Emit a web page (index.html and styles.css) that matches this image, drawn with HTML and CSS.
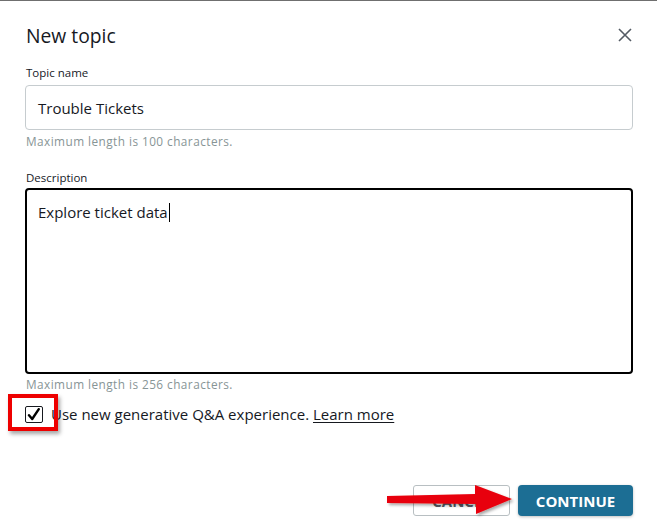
FILE: index.html
```html
<!DOCTYPE html>
<html lang="en">
<head>
<meta charset="utf-8">
<title>New topic</title>
<link rel="stylesheet" href="styles.css">
</head>
<body>
<div class="modal">
  <header class="modal-header">
    <h1 class="modal-title">New topic</h1>
    <button class="close-btn" aria-label="Close">
      <svg width="14" height="14" viewBox="0 0 14 14"><path d="M1 1 L13 13 M13 1 L1 13" stroke="#545b64" stroke-width="1.6" fill="none"/></svg>
    </button>
  </header>

  <div class="field">
    <label class="field-label">Topic name</label>
    <div class="input">Trouble Tickets</div>
    <div class="hint">Maximum length is 100 characters.</div>
  </div>

  <div class="field field-desc">
    <label class="field-label">Description</label>
    <div class="textarea">Explore ticket data<span class="caret"></span></div>
    <div class="hint">Maximum length is 256 characters.</div>
  </div>

  <div class="check-row">
    <span class="checkbox">
      <svg width="14" height="13" viewBox="0 0 14 13"><path d="M2 7.2 L5.2 11 L11.8 1.2" stroke="#000" stroke-width="2.4" fill="none" stroke-linecap="round" stroke-linejoin="round"/></svg>
    </span>
    <span class="check-text">Use new generative Q&amp;A experience. <a class="learn">Learn more</a></span>
    <span class="mark-box"></span>
  </div>

  <footer class="modal-footer">
    <button class="btn btn-cancel">CANCEL</button>
    <button class="btn btn-primary">CONTINUE</button>
    <svg class="arrow" width="140" height="40" viewBox="0 0 140 40">
      <defs>
        <filter id="sh" x="-10%" y="-30%" width="130%" height="170%">
          <feDropShadow dx="2" dy="2" stdDeviation="1.5" flood-color="#000" flood-opacity="0.35"/>
        </filter>
      </defs>
      <path d="M4 13 L92 11 L92 2 L129 16 L93 31 L93 21 L4 20 Z" fill="#e8000b" filter="url(#sh)"/>
    </svg>
  </footer>
</div>
</body>
</html>
```

FILE: styles.css
```css
* { box-sizing: border-box; }
html, body { margin: 0; padding: 0; }
body {
  width: 657px;
  height: 532px;
  background: #fff;
  border-top: 1px solid #6f6f6f;
  font-family: "Open Sans", "Liberation Sans", sans-serif;
  color: #16191f;
  overflow: hidden;
}
.modal {
  position: relative;
  padding: 0 24px 0 25px;
}
.modal-header {
  display: flex;
  align-items: center;
  justify-content: space-between;
  height: 64px;
  padding-top: 4px;
}
.modal-title {
  margin: 0 0 0 1px;
  font-size: 19.3px;
  font-weight: 400;
  color: #16191f;
}
.close-btn {
  border: 0;
  background: none;
  padding: 0;
  width: 14px;
  height: 14px;
  margin-right: 1px;
  display: flex;
}
.field { display: flex; flex-direction: column; }
.field-label {
  font-size: 11.5px;
  color: #16191f;
  margin: 0 0 4px 1px;
  line-height: 16px;
}
.input {
  height: 45px;
  border: 1px solid #c6cccf;
  border-radius: 4px;
  padding: 0 12px;
  display: flex;
  align-items: center;
  font-size: 15px;
}
.hint {
  font-size: 11.8px;
  color: #879596;
  margin: 3px 0 0 1px;
  line-height: 16px;
  letter-spacing: 0.45px;
}
.field-desc { margin-top: 21px; }
.field-desc .field-label { margin-bottom: 2px; }
.textarea {
  height: 186px;
  border: 2px solid #000;
  border-radius: 4px;
  padding: 11px 11px;
  font-size: 15px;
  line-height: 22px;
}
.caret {
  display: inline-block;
  width: 1px;
  height: 19px;
  background: #000;
  vertical-align: -4px;
  margin-left: 1px;
}
.field-desc .hint { margin-top: 2px; }
.check-row {
  position: relative;
  display: flex;
  align-items: center;
  gap: 8px;
  margin-top: 11px;
  height: 22px;
}
.checkbox {
  width: 18px;
  height: 17px;
  border: 1.5px solid #16191f;
  border-radius: 2px;
  display: flex;
  align-items: center;
  justify-content: center;
}
.check-text {
  font-size: 15px;
  color: #16191f;
}
.learn {
  color: #16191f;
  text-decoration: underline;
  text-underline-offset: 2px;
}
.mark-box {
  position: absolute;
  left: -17px;
  top: -9px;
  width: 50px;
  height: 37px;
  border: 4px solid #ee0000;
  box-shadow: 2px 3px 4px rgba(0,0,0,0.35);
}
.modal-footer {
  position: relative;
  display: flex;
  justify-content: flex-end;
  gap: 8px;
  margin-top: 60px;
}
.btn {
  height: 31px;
  font-family: "Open Sans", "Liberation Sans", sans-serif;
  font-size: 15px;
  font-weight: 700;
  border-radius: 3px;
  cursor: pointer;
}
.btn-cancel {
  width: 97px;
  background: #fff;
  border: 1px solid #b8bfc2;
  color: #545b64;
}
.btn-primary {
  width: 115px;
  background: #1c6e94;
  border: 0;
  color: #fff;
  border-radius: 4px;
  box-shadow: 0 1px 3px rgba(0,0,0,0.25);
}
.arrow {
  position: absolute;
  left: 358px;
  top: -2px;
}
```
